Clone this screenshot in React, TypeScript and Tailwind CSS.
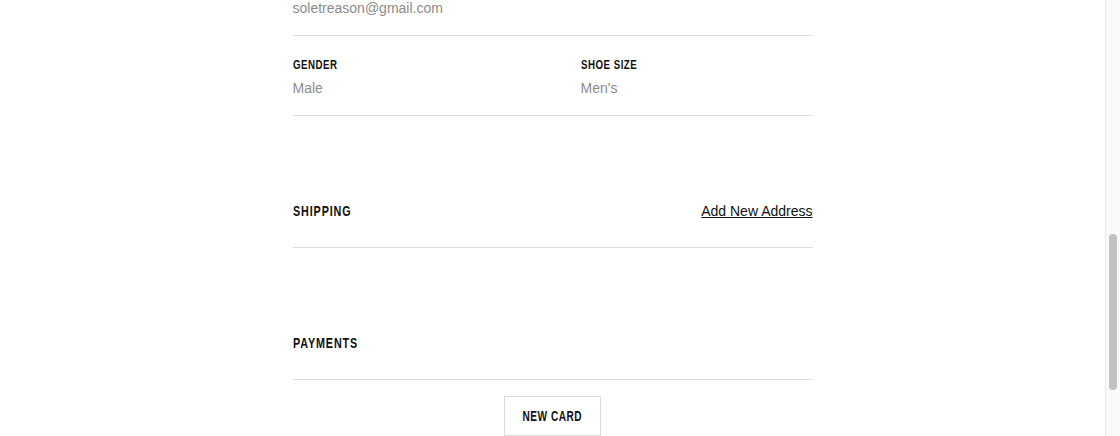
import React from "react";

// condensed look: Arial bold squeezed horizontally
const heading =
  "block w-max font-['Liberation_Sans',Arial,sans-serif] font-bold uppercase text-[#111] scale-x-[0.72]";
const body = "font-['Liberation_Sans',Arial,sans-serif] text-[14px]";

const Field: React.FC<{ label: string; value: string; className?: string }> = ({
  label,
  value,
  className,
}) => (
  <div className={className}>
    <span className={`${heading} origin-left text-[13.5px] leading-[16px] tracking-[0.05em]`}>
      {label}
    </span>
    <div className={`${body} mt-[5px] leading-[20px] text-[#8c8c8c]`}>{value}</div>
  </div>
);

const Section: React.FC<{ title: string; children?: React.ReactNode }> = ({
  title,
  children,
}) => (
  <div className="border-b border-[#dedede] pt-[85px] pb-[26px]">
    <div className="flex h-[20px] items-center justify-between">
      <span className={`${heading} origin-left text-[15px] leading-[20px] tracking-[0.08em]`}>
        {title}
      </span>
      {children}
    </div>
  </div>
);

export default function App() {
  return (
    <div className="flex h-[436px] w-[1120px] overflow-hidden bg-white">
      <main className="flex-1">
        <div className="mx-auto w-[520px]">
          <div className="h-[36px] border-b border-[#dedede]">
            <div className={`${body} leading-[16px] text-[#8c8c8c]`}>
              soletreason@gmail.com
            </div>
          </div>

          <div className="flex border-b border-[#dedede] pt-[21px] pb-[17px]">
            <Field className="w-[288px]" label="Gender" value="Male" />
            <Field className="flex-1" label="Shoe Size" value="Men's" />
          </div>

          <Section title="Shipping">
            <a href="#" className={`${body} leading-[20px] text-[#111] underline`}>
              Add New Address
            </a>
          </Section>

          <Section title="Payments" />

          <div className="flex justify-center pt-[16px]">
            <button
              type="button"
              className="flex h-[40px] w-[97px] items-center justify-center border border-[#dcdcdc] bg-white"
            >
              <span className={`${heading} origin-center text-[14px] leading-[16px] tracking-[0.05em]`}>
                New Card
              </span>
            </button>
          </div>
        </div>
      </main>

      <aside className="w-[15px] border-l border-[#e8e8e8] bg-[#fafafa] pt-[234px]">
        <div className="mx-auto h-[156px] w-[8px] rounded-full bg-[#c1c1c1]" />
      </aside>
    </div>
  );
}
